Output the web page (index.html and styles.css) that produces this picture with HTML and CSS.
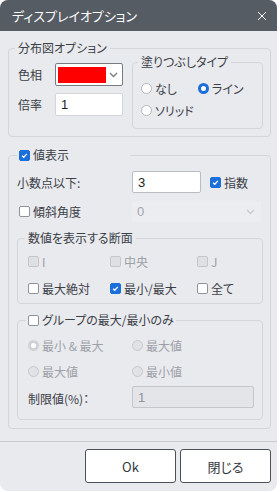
FILE: index.html
```html
<!DOCTYPE html>
<html lang="ja">
<head>
    <meta charset="UTF-8">
    <meta name="viewport" content="width=device-width, initial-scale=1.0">
    <title>ディスプレイオプション</title>
    <link rel="stylesheet" href="styles.css">
</head>
<body>
<div class="dialog">
    <div class="titlebar">
        <span class="title">ディスプレイオプション</span>
        <svg class="close" width="10" height="10" viewBox="0 0 10 10"><path d="M1 1L9 9M9 1L1 9" stroke="#fff" stroke-width="1" fill="none"/></svg>
    </div>

    <div class="content">
        <fieldset class="group dist">
            <legend>分布図オプション</legend>
            <div class="dist-grid">
                <div class="dist-fields">
                    <span class="lbl">色相</span>
                    <div class="color-select">
                        <span class="swatch"></span>
                        <svg width="9" height="6" viewBox="0 0 9 6"><path d="M1 1L4.5 4.5L8 1" stroke="#7a7f86" stroke-width="1.4" fill="none"/></svg>
                    </div>
                    <span class="lbl">倍率</span>
                    <div class="textbox light">1</div>
                </div>
                <fieldset class="group fill">
                    <legend>塗りつぶしタイプ</legend>
                    <div class="radio-grid">
                        <span class="opt"><span class="radio"></span>なし</span>
                        <span class="opt"><span class="radio on"></span>ライン</span>
                        <span class="opt"><span class="radio"></span>ソリッド</span>
                    </div>
                </fieldset>
            </div>
        </fieldset>

        <fieldset class="group values">
            <legend class="check-legend wide"><span class="check on"><svg viewBox="0 0 11 11"><path d="M2.6 5.7L4.6 7.7L8.4 3.5" stroke="#fff" stroke-width="1.6" fill="none"/></svg></span>値表示</legend>

            <div class="decimal-row">
                <span class="lbl">小数点以下:</span>
                <div class="textbox">3</div>
                <span class="opt exp"><span class="check on"><svg viewBox="0 0 11 11"><path d="M2.6 5.7L4.6 7.7L8.4 3.5" stroke="#fff" stroke-width="1.6" fill="none"/></svg></span>指数</span>
            </div>

            <div class="tilt-row">
                <span class="opt"><span class="check"></span>傾斜角度</span>
                <div class="select-off">
                    <span>0</span>
                    <svg width="9" height="6" viewBox="0 0 9 6"><path d="M1 1L4.5 4.5L8 1" stroke="#c3c6cb" stroke-width="1.2" fill="none"/></svg>
                </div>
            </div>

            <fieldset class="group sections">
                <legend>数値を表示する断面</legend>
                <div class="check-grid">
                    <span class="opt off"><span class="check dis"></span>I</span>
                    <span class="opt off"><span class="check dis"></span>中央</span>
                    <span class="opt off"><span class="check dis"></span>J</span>
                    <span class="opt"><span class="check"></span>最大絶対</span>
                    <span class="opt"><span class="check on"><svg viewBox="0 0 11 11"><path d="M2.6 5.7L4.6 7.7L8.4 3.5" stroke="#fff" stroke-width="1.6" fill="none"/></svg></span>最小/最大</span>
                    <span class="opt"><span class="check"></span>全て</span>
                </div>
            </fieldset>

            <fieldset class="group minmax">
                <legend class="check-legend"><span class="check"></span>グループの最大/最小のみ</legend>
                <div class="minmax-grid">
                    <span class="opt off"><span class="radio dis on"></span>最小 &amp; 最大</span>
                    <span class="opt off"><span class="radio dis"></span>最大値</span>
                    <span class="opt off"><span class="radio dis"></span>最大値</span>
                    <span class="opt off"><span class="radio dis"></span>最小値</span>
                    <span class="lbl">制限値(%)：</span>
                    <div class="textbox disabled">1</div>
                </div>
            </fieldset>
        </fieldset>
    </div>

    <div class="footer">
        <button type="button">Ok</button>
        <button type="button">閉じる</button>
    </div>
</div>
</body>
</html>
```

FILE: styles.css
```css
body {
    margin: 0;
    background-color: #fff;
    font-family: "Noto Sans CJK JP", "Noto Sans", sans-serif;
    font-size: 12px;
    color: #3b4047;
    font-feature-settings: "palt";
}
.dialog {
    width: 277px;
    height: 491px;
    background-color: #e9eaee;
    border-radius: 8px;
    overflow: hidden;
    display: flex;
    flex-direction: column;
}
.titlebar {
    height: 31px;
    flex: none;
    background-color: #565c64;
    color: #fff;
    display: flex;
    align-items: center;
    justify-content: space-between;
    padding: 0 10px 0 12px;
    font-size: 13px;
}
.content {
    padding: 10px 6px 0 8px;
}
fieldset.group {
    margin: 0;
    border: 1px solid #d3d5da;
    border-radius: 4px;
    min-width: 0;
}
legend {
    padding: 0 3px;
    margin-left: -3px;
    line-height: 14px;
}
.lbl {
    white-space: nowrap;
}
.opt {
    display: flex;
    align-items: center;
    gap: 3px;
    white-space: nowrap;
}
.opt.off {
    color: #9ca0a7;
}

/* controls */
.check {
    width: 11px;
    height: 11px;
    box-sizing: border-box;
    border: 1px solid #8e939a;
    border-radius: 2px;
    background-color: #fff;
    flex: none;
    display: inline-block;
}
.check.on {
    background-color: #1b6fdb;
    border-color: #1b6fdb;
}
.check.on svg {
    display: block;
    width: 9px;
    height: 9px;
}
.check.dis {
    background-color: #dfe0e4;
    border-color: #c3c6cb;
}
.radio {
    width: 11px;
    height: 11px;
    box-sizing: border-box;
    border: 1px solid #b3b7bd;
    border-radius: 50%;
    background-color: #fff;
    flex: none;
}
.radio.on {
    border: 3px solid #1b6fdb;
}
.radio.dis {
    background-color: #e1e2e6;
    border-color: #c6c9ce;
}
.radio.dis.on {
    border: 3px solid #cfd2d6;
    background-color: #fff;
}
.textbox {
    box-sizing: border-box;
    height: 22px;
    border: 1px solid #b9bcc2;
    border-radius: 2px;
    background-color: #fff;
    padding: 0 5px;
    display: flex;
    align-items: center;
    font-family: "Liberation Sans", sans-serif;
    font-size: 13px;
    color: #222;
}
.textbox.light {
    border-color: #d3d5d9;
}
.textbox.disabled {
    background-color: #e4e5e8;
    border-color: #c3c6ca;
    color: #8e9299;
}

/* 分布図オプション */
.dist {
    padding: 0 7px 7px 9px;
}
.dist-grid {
    display: grid;
    grid-template-columns: 105px 131px;
    column-gap: 9px;
    align-items: start;
}
.dist-fields {
    margin-top: 8px;
    display: grid;
    grid-template-columns: 37px 68px;
    grid-template-rows: 23px 23px;
    row-gap: 7px;
    align-items: center;
}
.dist-fields .textbox {
    height: 23px;
}
.color-select {
    box-sizing: border-box;
    height: 23px;
    border: 1px solid #777c83;
    border-radius: 2px;
    background-color: #fff;
    display: flex;
    align-items: center;
    padding: 0 4px 0 2px;
    gap: 3px;
}
.swatch {
    width: 48px;
    height: 16px;
    background-color: #f00;
}
.fill {
    padding: 8px 4px 7px 8px;
}
.radio-grid {
    display: grid;
    grid-template-columns: 57px auto;
    grid-template-rows: 22px 22px;
}

/* 値表示 */
.values {
    margin-top: 10px !important;
    padding: 0 7px 8px 8px;
}
.check-legend {
    display: flex;
    align-items: center;
    gap: 3px;
    line-height: 16px;
    margin-left: -2px;
    padding: 0 2px;
}
.check-legend.wide {
    width: 109px;
    margin-left: 0;
}
.decimal-row {
    margin-top: 8px;
    height: 22px;
    display: grid;
    grid-template-columns: 115px 69px auto;
    align-items: center;
}
.decimal-row .exp {
    margin-left: 9px;
}
.tilt-row {
    margin-top: 8px;
    height: 21px;
    display: grid;
    grid-template-columns: 115px 129px;
    align-items: center;
}
.tilt-row .opt {
    padding-left: 2px;
}
.select-off {
    height: 21px;
    background-color: #ecedf0;
    display: flex;
    align-items: center;
    justify-content: space-between;
    padding: 0 6px 0 5px;
    font-family: "Liberation Sans", sans-serif;
    font-size: 13px;
    color: #a2a6ac;
}
.sections {
    margin-top: 9px !important;
    padding: 6px 8px 5px 10px;
}
.check-grid {
    display: grid;
    grid-template-columns: 82px 87px auto;
    grid-template-rows: 20px 20px;
    row-gap: 7px;
    align-items: center;
}
.minmax {
    margin-top: 8px !important;
    padding: 6px 8px 11px 10px;
}
.minmax-grid {
    display: grid;
    grid-template-columns: 104px 122px;
    grid-template-rows: 22px 22px 22px;
    row-gap: 4px;
    align-items: center;
}
.minmax-grid .lbl {
    padding-top: 2px;
}

/* buttons */
.footer {
    margin-top: auto;
    border-top: 1px solid #c9cbd0;
    display: flex;
    justify-content: flex-end;
    gap: 4px;
    padding: 7px 6px 8px 0;
}
button {
    width: 91px;
    height: 34px;
    background-color: #fff;
    border: 1px solid #4b5058;
    border-radius: 3px;
    font-family: "Noto Sans CJK JP", "Noto Sans", sans-serif;
    font-size: 13px;
    color: #33373d;
    font-feature-settings: "palt";
}
```
